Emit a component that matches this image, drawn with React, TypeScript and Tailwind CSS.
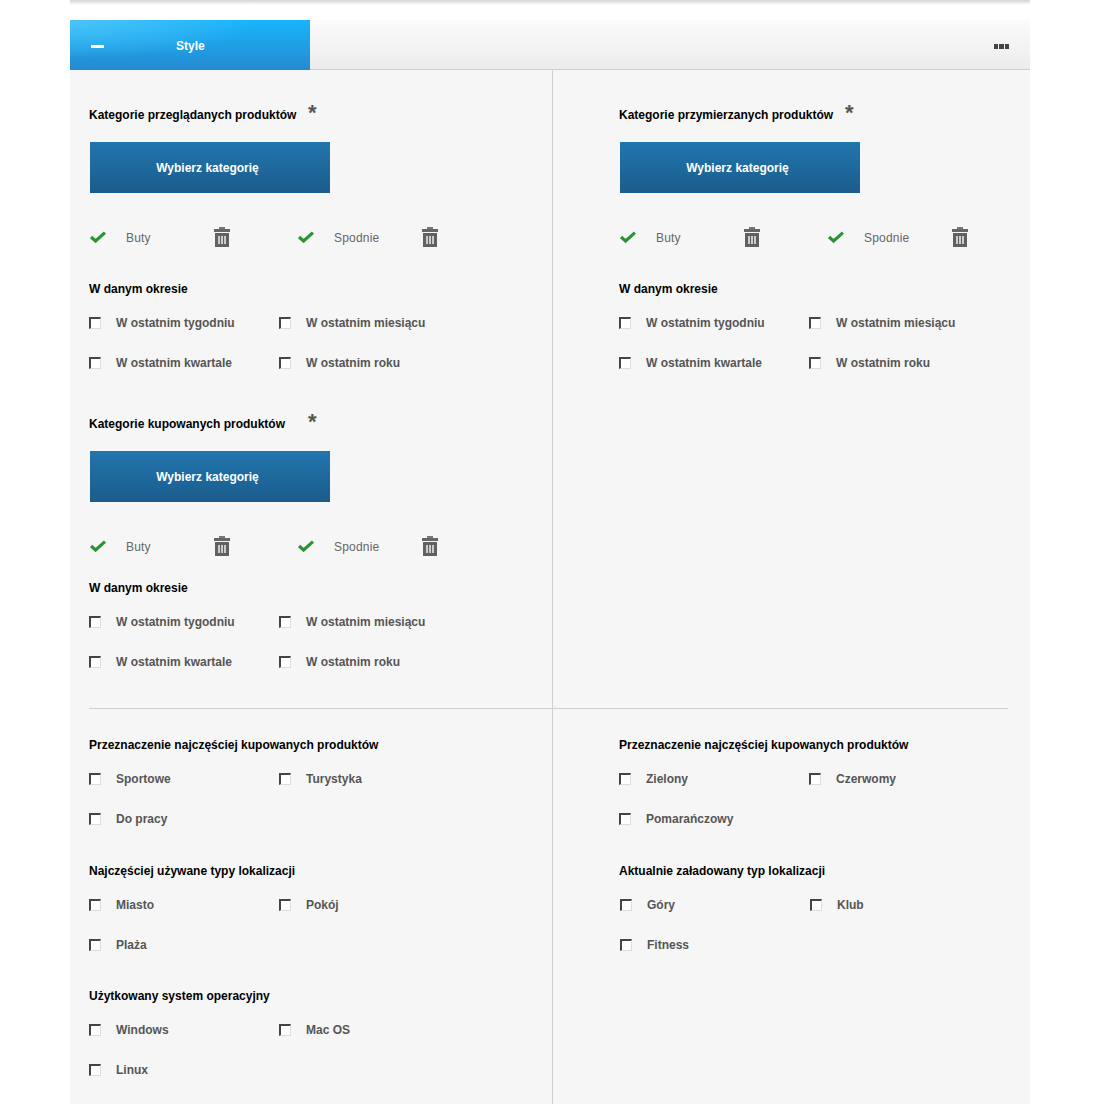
const Check = () => (
  <svg width="16" height="12" viewBox="0 0 16 12" className="shrink-0">
    <path d="M1 6 L5.6 10 L15 1.6" fill="none" stroke="#2a9134" strokeWidth="3.2" />
  </svg>
);

const Trash = () => (
  <svg width="16" height="20" viewBox="0 0 16 20" className="shrink-0">
    <rect x="5" y="0" width="6" height="2" fill="#777" />
    <rect x="0" y="2" width="16" height="3" fill="#666" />
    <rect x="1" y="6" width="14" height="14" fill="#616161" />
    <rect x="4" y="9" width="2" height="8" fill="#ccc" />
    <rect x="7" y="9" width="2" height="8" fill="#ccc" />
    <rect x="10" y="9" width="2" height="8" fill="#ccc" />
  </svg>
);

const Title = ({ children, className = "" }: { children: string; className?: string }) => (
  <div className={`h-5 pt-px leading-5 text-xs font-bold text-black ${className}`}>{children}</div>
);

const Required = ({ children, width }: { children: string; width: string }) => (
  <div className="flex h-5 items-center pt-px">
    <span className={`text-xs leading-5 font-bold text-black whitespace-nowrap ${width}`}>{children}</span>
    <span className="-mt-[3px] text-[22px] leading-5 font-bold text-[#555]">*</span>
  </div>
);

const Opt = ({ label, nudge = false }: { label: string; nudge?: boolean }) => (
  <div className={`flex h-5 w-[190px] items-center pt-px ${nudge ? "pl-px" : ""}`}>
    <span className="h-3 w-3 shrink-0 border-t-2 border-r border-b border-l-2 border-t-[#444] border-r-[#ddd] border-b-[#ddd] border-l-[#444] bg-white" />
    <span className="ml-[15px] text-xs leading-5 font-bold text-[#555]">{label}</span>
  </div>
);

const Options = ({ items, nudge }: { items: string[]; nudge?: boolean }) => (
  <div className="mt-[14px] grid w-[380px] grid-cols-2 gap-y-5">
    {items.map((i) => (
      <Opt key={i} label={i} nudge={nudge} />
    ))}
  </div>
);

const Chip = ({ label }: { label: string }) => (
  <div className="flex h-6 w-[208px] items-center pl-px">
    <Check />
    <span className="ml-5 w-[88px] pt-px text-xs tracking-[0.2px] text-[#666]">{label}</span>
    <Trash />
  </div>
);

const Category = ({ title, gap, width, className = "" }: { title: string; gap: string; width: string; className?: string }) => (
  <div className={className}>
    <Required width={width}>{title}</Required>
    <button className="mt-[18px] ml-px block h-[51px] w-[240px] bg-gradient-to-b from-[#2176ae] to-[#1b5c8c] pr-[5px] text-xs font-bold text-white">
      Wybierz kategorię
    </button>
    <div className="mt-8 flex">
      <Chip label="Buty" />
      <Chip label="Spodnie" />
    </div>
    <Title className={gap}>W danym okresie</Title>
    <Options items={["W ostatnim tygodniu", "W ostatnim miesiącu", "W ostatnim kwartale", "W ostatnim roku"]} />
  </div>
);

export default function App() {
  return (
    <div className="h-[1104px] w-[1100px] overflow-hidden bg-white font-['Liberation_Sans',Arial,sans-serif]">
      <div className="mx-auto w-[960px]">
        <div className="h-[5px] bg-gradient-to-b from-[#d4d4d4] to-white" />
        <div className="mt-[15px] flex h-[50px] justify-between border-b border-[#cfcfcf] bg-gradient-to-b from-[#fbfbfb] to-[#ececec]">
          <div className="flex h-[50px] w-[240px] items-center bg-[radial-gradient(ellipse_at_0%_0%,#4cc3f8_0%,transparent_55%),linear-gradient(to_bottom,#17b5fc,#268ad0)] pl-[21px]">
            <span className="mt-[2px] h-[3px] w-[13px] bg-white" />
            <span className="mt-[2px] ml-[72px] text-xs font-bold text-white">Style</span>
          </div>
          <div className="mt-[4px] mr-[21px] flex items-center gap-px">
            <span className="h-[5px] w-[4.5px] bg-[#444]" />
            <span className="h-[5px] w-[4.5px] bg-[#444]" />
            <span className="h-[5px] w-[4.5px] bg-[#444]" />
          </div>
        </div>
        <div className="bg-[#f6f6f6]">
          <div className="flex h-[638px]">
            <div className="w-[483px] shrink-0 border-r border-[#cfcfcf] pt-[34px] pl-[19px]">
              <Category title="Kategorie przeglądanych produktów" width="w-[219px]" gap="mt-[29px]" />
              <Category title="Kategorie kupowanych produktów" width="w-[219px]" gap="mt-[19px]" className="mt-[41px]" />
            </div>
            <div className="pt-[34px] pl-[66px]">
              <Category title="Kategorie przymierzanych produktów" width="w-[226px]" gap="mt-[29px]" />
            </div>
          </div>
          <div className="mr-[22px] ml-[19px] h-px bg-[#cfcfcf]" />
          <div className="flex h-[395px]">
            <div className="w-[483px] shrink-0 border-r border-[#cfcfcf] pt-[25px] pl-[19px]">
              <Title>Przeznaczenie najczęściej kupowanych produktów</Title>
              <Options items={["Sportowe", "Turystyka", "Do pracy"]} />
              <Title className="mt-8">Najczęściej używane typy lokalizacji</Title>
              <Options items={["Miasto", "Pokój", "Plaża"]} />
              <Title className="mt-[31px]">Użytkowany system operacyjny</Title>
              <Options items={["Windows", "Mac OS", "Linux"]} />
            </div>
            <div className="pt-[25px] pl-[66px]">
              <Title>Przeznaczenie najczęściej kupowanych produktów</Title>
              <Options items={["Zielony", "Czerwomy", "Pomarańczowy"]} />
              <Title className="mt-8">Aktualnie załadowany typ lokalizacji</Title>
              <Options items={["Góry", "Klub", "Fitness"]} nudge />
            </div>
          </div>
        </div>
      </div>
    </div>
  );
}
